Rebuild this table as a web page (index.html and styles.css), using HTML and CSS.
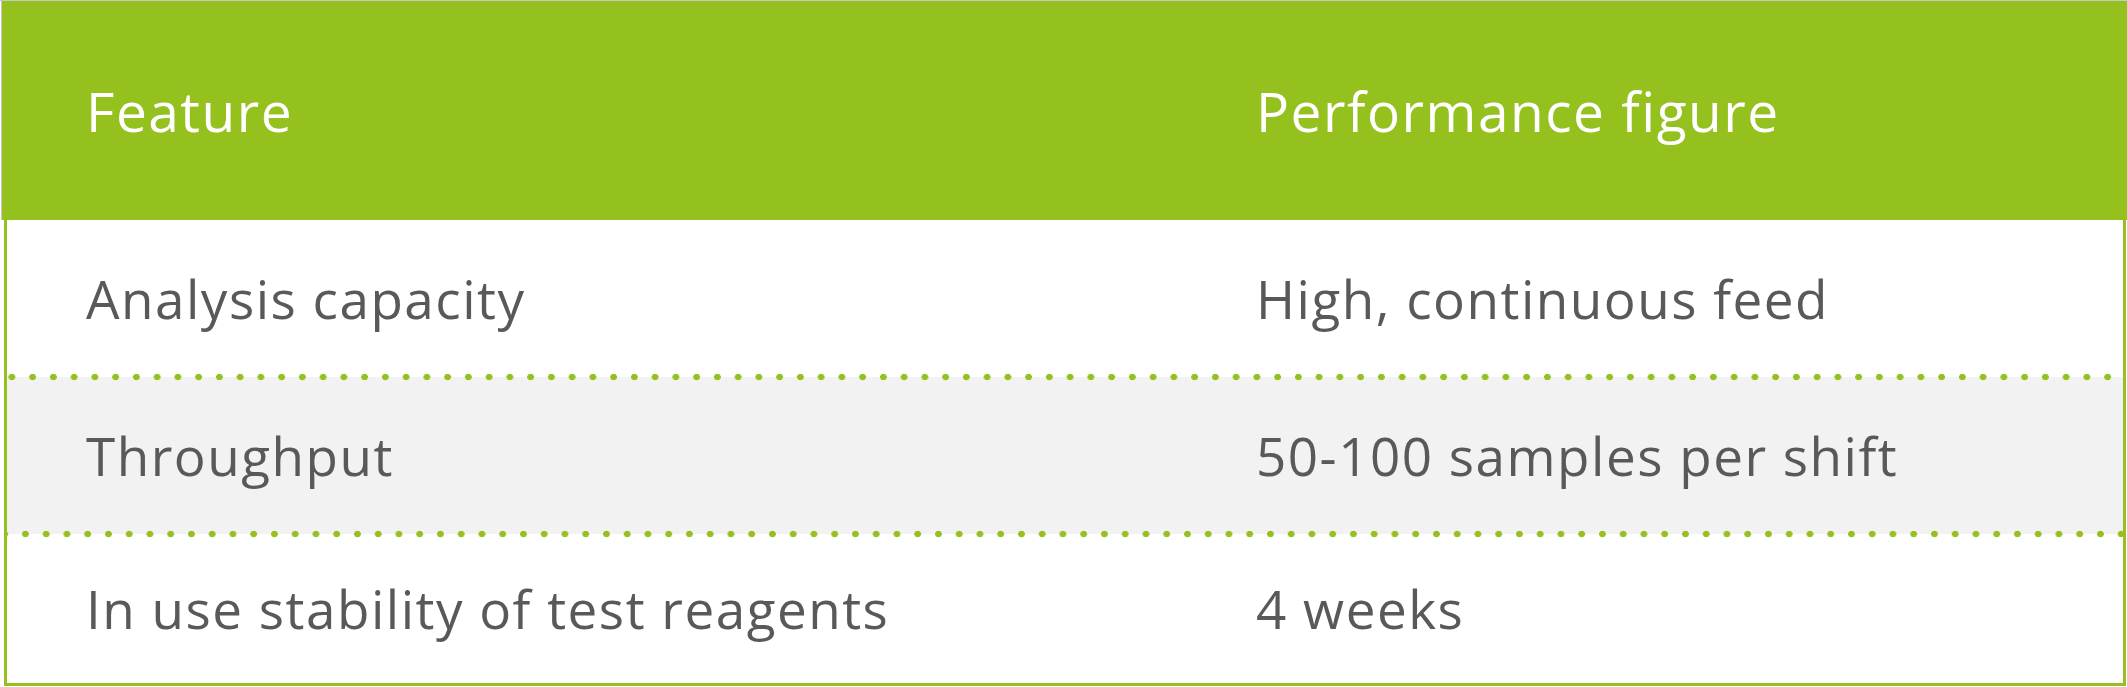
FILE: index.html
```html
<!DOCTYPE html>
<html lang="en">
<head>
<meta charset="utf-8">
<title>Feature performance</title>
<link rel="stylesheet" href="styles.css">
</head>
<body>
<div class="sheet">
  <div class="head">
    <div class="cell">Feature</div>
    <div class="cell">Performance figure</div>
  </div>
  <div class="rows">
    <div class="row row-1">
      <div class="cell">Analysis capacity</div>
      <div class="cell">High, continuous feed</div>
    </div>
    <div class="row row-2 shaded">
      <div class="cell">Throughput</div>
      <div class="cell">50-100 samples per shift</div>
    </div>
    <div class="row row-3">
      <div class="cell">In use stability of test reagents</div>
      <div class="cell">4 weeks</div>
    </div>
  </div>
</div>
</body>
</html>
```

FILE: styles.css
```css
html, body {
  margin: 0;
  padding: 0;
  background: #ffffff;
}

body {
  width: 2127px;
  height: 687px;
  overflow: hidden;
  font-family: "Open Sans", "Noto Sans", sans-serif;
  font-size: 53px;
  letter-spacing: 1.5px;
  line-height: 1;
}

.sheet {
  border-top: 1px solid #c9c9c9;
  display: flex;
  flex-direction: column;
}

.head {
  margin-left: 1px;
  border-left: 1px solid #c9c9c9;
  height: 219px;
  background: #95c11f;
  color: #ffffff;
  font-size: 55px;
  display: grid;
  grid-template-columns: 1170px 1fr;
  align-items: center;
  padding-left: 84px;
}

.rows {
  margin: 0 1px 0 4px;
  border: 3px solid #95c11f;
  border-top: none;
  color: #58595b;
  display: flex;
  flex-direction: column;
}

.row {
  position: relative;
  display: grid;
  grid-template-columns: 1170px 1fr;
  align-items: center;
  padding-left: 79px;
  background: #ffffff;
}

.row-1 { height: 157px; }
.row-2 { height: 157px; }
.row-3 { height: 149px; }

.shaded {
  background: #f2f2f2;
}

.row-2::before,
.row-3::before {
  content: "";
  position: absolute;
  left: 0;
  right: 0;
  top: -4px;
  height: 8px;
  background-image: radial-gradient(circle at center, #95c11f 0, #95c11f 3px, rgba(149, 193, 31, 0) 3.6px);
  background-size: 20.75px 8px;
  background-repeat: repeat-x;
}

.row-2::before {
  background-position: -5.5px 0;
}

.row-3::before {
  background-position: -12.7px 0;
}

.cell {
  white-space: nowrap;
}
```
